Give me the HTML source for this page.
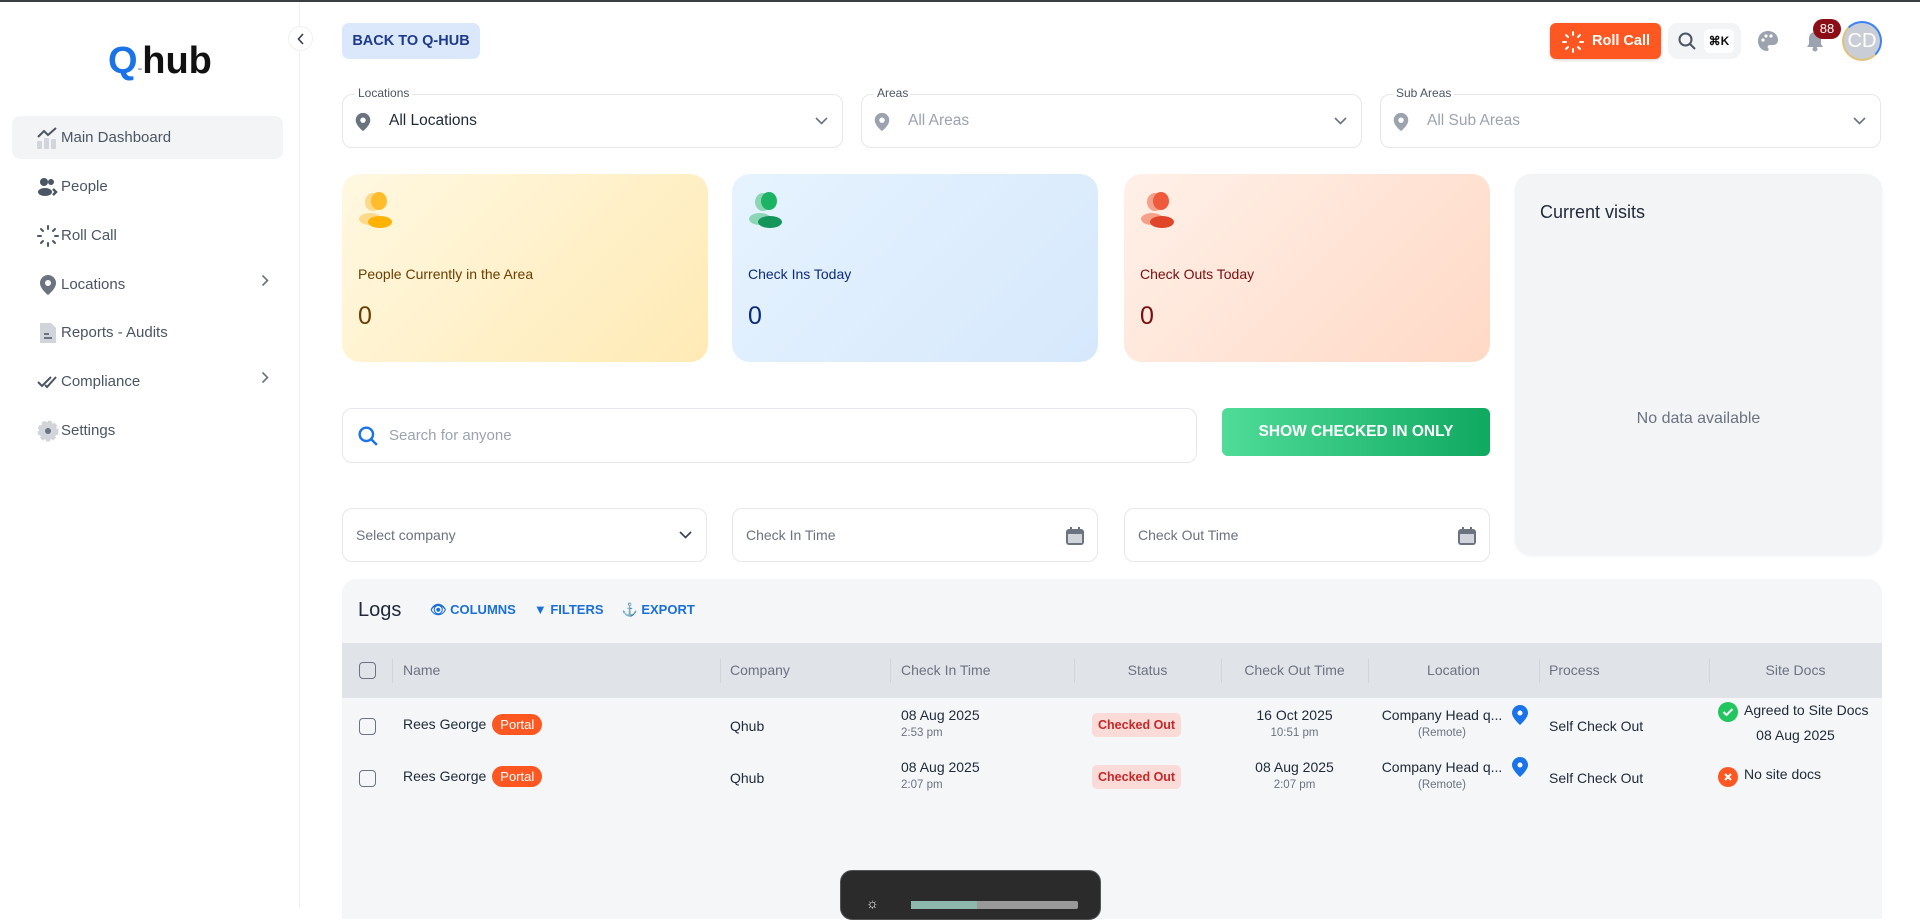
<!DOCTYPE html>
<html><head><meta charset="utf-8"><style>
*{box-sizing:border-box;margin:0;padding:0}
body{width:1920px;height:907px;overflow:hidden;font-family:"Liberation Sans",sans-serif;background:#fff;position:relative;color:#374151}
.a{position:absolute}
.top{left:0;top:0;width:1920px;height:2px;background:#3a3f44}
.side{left:0;top:2px;width:300px;height:905px;border-right:1px solid #eef0f3}
.mi{position:absolute;left:12px;width:271px;height:43px;border-radius:8px;display:flex;align-items:center;padding-left:49px;font-size:15px;color:#4b5563}
.mi svg{position:absolute;left:25px;top:11px}
.chev{position:absolute;right:14px;top:15px}
.box{border:1px solid #e5e7eb;border-radius:10px;background:#fff}
.lbl{position:absolute;top:-9px;left:12px;background:#fff;padding:0 3px;font-size:12px;color:#4b5563}
.dd{position:absolute;right:14px;top:22px}
.card{border-radius:18px}
.th{position:absolute;top:0;height:55px;line-height:55px;font-size:14px;color:#6b7280}
.sep{position:absolute;top:16px;width:1px;height:24px;background:#d1d5db}
.cb{position:absolute;width:17px;height:17px;border:1.5px solid #6b7280;border-radius:4px}
.td{position:absolute;font-size:14px;color:#1f2937}
.sm{font-size:11.5px;color:#6b7280}
.portal{display:inline-block;background:#ff5722;color:#fff;border-radius:12px;padding:3px 8px;font-size:13px;margin-left:6px}
.co{position:absolute;background:#fadbd8;color:#c62828;font-size:12.5px;font-weight:bold;border-radius:5px;padding:5px 6px}
</style></head><body>
<div class="a top"></div>
<div class="a side">
 <div class="a" style="left:108px;top:38px;font-size:38px;font-weight:bold;letter-spacing:0px"><span style="color:#1a73e8">Q</span><span style="color:#9ca3af;font-size:14px">-</span><span style="color:#111">hub</span></div>
 <div class="mi" style="top:114px;background:#f3f4f6"><svg width="22" height="22" viewBox="0 0 22 22"><rect x="0" y="14" width="5" height="8" rx="1" fill="#d1d5db"/><rect x="7" y="11" width="5" height="11" rx="1" fill="#d1d5db"/><rect x="14" y="12" width="5" height="10" rx="1" fill="#d1d5db"/><path d="M1 10 L7 4 L11 8 L19 1" stroke="#4b5563" stroke-width="2" fill="none"/></svg>Main Dashboard</div>
 <div class="mi" style="top:163px"><svg width="22" height="22" viewBox="0 0 22 22"><circle cx="7" cy="6" r="4" fill="#4b5563"/><circle cx="14" cy="6" r="3" fill="#4b5563"/><ellipse cx="8" cy="16" rx="7" ry="4" fill="#4b5563"/><path d="M16 13 l3 3 -3 3" stroke="#4b5563" stroke-width="2.5" fill="none"/></svg>People</div>
 <div class="mi" style="top:212px"><svg width="22" height="22" viewBox="0 0 22 22" stroke="#4b5563" stroke-width="2" stroke-linecap="round"><path d="M11 1v3M11 18v3M1 11h3M18 11h3M4 4l2 2M16 16l2 2M4 18l2-2M16 6l2-2"/></svg>Roll Call</div>
 <div class="mi" style="top:261px"><svg width="22" height="22" viewBox="0 0 22 22"><path d="M11 1a8 8 0 0 0-8 8c0 6 8 12 8 12s8-6 8-12a8 8 0 0 0-8-8z" fill="#6b7280"/><circle cx="11" cy="9" r="3" fill="#fff"/></svg>Locations<svg class="chev" style="left:auto" width="8" height="13" viewBox="0 0 8 13"><path d="M1.5 1.5l5 5-5 5" stroke="#6b7280" stroke-width="1.6" fill="none"/></svg></div>
 <div class="mi" style="top:309px"><svg width="22" height="22" viewBox="0 0 22 22"><path d="M3 1h11l5 5v15H3z" fill="#d1d5db"/><path d="M7 12h5M7 16h8" stroke="#6b7280" stroke-width="2"/></svg>Reports - Audits</div>
 <div class="mi" style="top:358px"><svg width="22" height="22" viewBox="0 0 22 22" stroke="#4b5563" stroke-width="2" fill="none"><path d="M1 11l4 4 9-9M8 14l2 2 9-10"/></svg>Compliance<svg class="chev" style="left:auto" width="8" height="13" viewBox="0 0 8 13"><path d="M1.5 1.5l5 5-5 5" stroke="#6b7280" stroke-width="1.6" fill="none"/></svg></div>
 <div class="mi" style="top:407px"><svg width="22" height="22" viewBox="0 0 22 22"><circle cx="11" cy="11" r="9" fill="#d1d5db" stroke="#d1d5db" stroke-width="3" stroke-dasharray="4 2"/><circle cx="11" cy="11" r="3" fill="#6b7280"/></svg>Settings</div>
</div>
<div class="a" style="left:288px;top:26px;width:25px;height:25px;border-radius:50%;border:1px solid #eef0f3;background:#fff"><svg class="a" style="left:8px;top:6px" width="8" height="12" viewBox="0 0 8 12"><path d="M6 1L1.5 6 6 11" stroke="#374151" stroke-width="1.6" fill="none"/></svg></div>

<div class="a" style="left:342px;top:23px;width:138px;height:36px;background:#dbe8fb;border-radius:7px;color:#1e3a8a;font-size:14.5px;font-weight:bold;text-align:center;line-height:36px">BACK TO Q-HUB</div>

<div class="a" style="left:1550px;top:23px;width:111px;height:36px;background:#ff5722;border-radius:6px;color:#fff;font-weight:bold;font-size:14.5px;line-height:36px;padding-left:42px;box-shadow:0 1px 3px rgba(0,0,0,.2)"><svg class="a" style="left:12px;top:8px" width="22" height="22" viewBox="0 0 22 22" stroke="#fff" stroke-width="2" stroke-linecap="round"><path d="M11 1v3M11 18v3M1 11h3M18 11h3M4 4l2 2M16 16l2 2M4 18l2-2M16 6l2-2"/></svg>Roll Call</div>
<div class="a" style="left:1668px;top:23px;width:73px;height:36px;background:#f3f4f6;border-radius:10px"><svg class="a" style="left:10px;top:9px" width="18" height="18" viewBox="0 0 18 18" stroke="#4b5563" stroke-width="2" fill="none"><circle cx="7.5" cy="7.5" r="6"/><path d="M12 12l5 5"/></svg><div class="a" style="left:36px;top:6px;width:30px;height:24px;background:#fff;border-radius:6px;font-size:12px;font-weight:bold;text-align:center;line-height:24px;color:#111">⌘K</div></div>
<svg class="a" style="left:1757px;top:30px" width="22" height="22" viewBox="0 0 22 22"><path d="M11 1C5 1 1 5 1 11s4 10 9 10c2 0 2-2 1-3s0-3 2-3h3c3 0 5-2 5-5 0-5-4-9-10-9z" fill="#9ca3af"/><circle cx="6" cy="10" r="1.6" fill="#fff"/><circle cx="9" cy="6" r="1.6" fill="#fff"/><circle cx="14" cy="6" r="1.6" fill="#fff"/></svg>
<svg class="a" style="left:1804px;top:30px" width="22" height="22" viewBox="0 0 22 22"><path d="M11 2a6 6 0 0 0-6 6v6l-2 3h16l-2-3V8a6 6 0 0 0-6-6z" fill="#9ca3af"/><circle cx="11" cy="19" r="2.5" fill="#9ca3af"/></svg>
<div class="a" style="left:1813px;top:19px;width:28px;height:20px;background:#8b0d16;border-radius:10px;color:#fff;font-size:13px;text-align:center;line-height:20px">88</div>
<div class="a" style="left:1842px;top:21px;width:40px;height:40px;border-radius:50%;background:#c9ced6;border:2px solid #e0c27a;border-top-color:#3b82f6;border-right-color:#3b82f6;color:#fff;font-size:20px;text-align:center;line-height:36px">CD</div>

<!-- filters -->
<div class="a box" style="left:342px;top:94px;width:501px;height:54px"><span class="lbl">Locations</span><svg class="a" style="left:10px;top:16px" width="20" height="22" viewBox="0 0 22 22"><path d="M11 1a8 8 0 0 0-8 8c0 6 8 12 8 12s8-6 8-12a8 8 0 0 0-8-8z" fill="#6b7280"/><circle cx="11" cy="9" r="3" fill="#fff"/></svg><span class="a" style="left:46px;top:17px;font-size:15.5px;color:#1f2937">All Locations</span><svg class="dd" width="13" height="8" viewBox="0 0 13 8"><path d="M1 1l5.5 5.5L12 1" stroke="#6b7280" stroke-width="1.6" fill="none"/></svg></div>
<div class="a box" style="left:861px;top:94px;width:501px;height:54px"><span class="lbl">Areas</span><svg class="a" style="left:10px;top:16px" width="20" height="22" viewBox="0 0 22 22"><path d="M11 1a8 8 0 0 0-8 8c0 6 8 12 8 12s8-6 8-12a8 8 0 0 0-8-8z" fill="#9ca3af"/><circle cx="11" cy="9" r="3" fill="#fff"/></svg><span class="a" style="left:46px;top:17px;font-size:15.5px;color:#9ca3af">All Areas</span><svg class="dd" width="13" height="8" viewBox="0 0 13 8"><path d="M1 1l5.5 5.5L12 1" stroke="#6b7280" stroke-width="1.6" fill="none"/></svg></div>
<div class="a box" style="left:1380px;top:94px;width:501px;height:54px"><span class="lbl">Sub Areas</span><svg class="a" style="left:10px;top:16px" width="20" height="22" viewBox="0 0 22 22"><path d="M11 1a8 8 0 0 0-8 8c0 6 8 12 8 12s8-6 8-12a8 8 0 0 0-8-8z" fill="#9ca3af"/><circle cx="11" cy="9" r="3" fill="#fff"/></svg><span class="a" style="left:46px;top:17px;font-size:15.5px;color:#9ca3af">All Sub Areas</span><svg class="dd" width="13" height="8" viewBox="0 0 13 8"><path d="M1 1l5.5 5.5L12 1" stroke="#6b7280" stroke-width="1.6" fill="none"/></svg></div>

<!-- cards -->
<div class="a card" style="left:342px;top:174px;width:366px;height:188px;background:linear-gradient(135deg,#fff8e1,#ffeab5)">
 <svg class="a" style="left:15px;top:15px" width="42" height="42" viewBox="0 0 42 42"><ellipse cx="16" cy="13" rx="8" ry="9" fill="#ffd98a"/><ellipse cx="13" cy="30" rx="11" ry="6" fill="#ffd98a"/><ellipse cx="22" cy="12" rx="8" ry="9" fill="#ffbd2e"/><ellipse cx="23" cy="33" rx="12" ry="6" fill="#ffb300"/></svg>
 <div class="a" style="left:16px;top:92px;font-size:14px;color:#6b3d00">People Currently in the Area</div><div class="a" style="left:16px;top:128px;font-size:25px;color:#6b3d00">0</div></div>
<div class="a card" style="left:732px;top:174px;width:366px;height:188px;background:linear-gradient(135deg,#e6f3ff,#d6e8fc)">
 <svg class="a" style="left:15px;top:15px" width="42" height="42" viewBox="0 0 42 42"><ellipse cx="16" cy="13" rx="8" ry="9" fill="#8dd6b5"/><ellipse cx="13" cy="30" rx="11" ry="6" fill="#8dd6b5"/><ellipse cx="22" cy="12" rx="8" ry="9" fill="#1db364"/><ellipse cx="23" cy="33" rx="12" ry="6" fill="#14955a"/></svg>
 <div class="a" style="left:16px;top:92px;font-size:14px;color:#0d2a7a">Check Ins Today</div><div class="a" style="left:16px;top:128px;font-size:25px;color:#0d2a7a">0</div></div>
<div class="a card" style="left:1124px;top:174px;width:366px;height:188px;background:linear-gradient(135deg,#fff0e8,#ffd9c6)">
 <svg class="a" style="left:15px;top:15px" width="42" height="42" viewBox="0 0 42 42"><ellipse cx="16" cy="13" rx="8" ry="9" fill="#f6a08a"/><ellipse cx="13" cy="30" rx="11" ry="6" fill="#f6a08a"/><ellipse cx="22" cy="12" rx="8" ry="9" fill="#ef5a3c"/><ellipse cx="23" cy="33" rx="12" ry="6" fill="#e0452a"/></svg>
 <div class="a" style="left:16px;top:92px;font-size:14px;color:#7a0d0d">Check Outs Today</div><div class="a" style="left:16px;top:128px;font-size:25px;color:#7a0d0d">0</div></div>
<div class="a" style="left:1515px;top:174px;width:367px;height:381px;background:#f3f4f6;border-radius:16px;box-shadow:0 1px 3px rgba(0,0,0,.06)"><div class="a" style="left:25px;top:28px;font-size:18px;color:#1f2937">Current visits</div><div class="a" style="left:0;width:367px;top:236px;text-align:center;font-size:16px;color:#6b7280">No data available</div></div>

<div class="a box" style="left:342px;top:408px;width:855px;height:55px"><svg class="a" style="left:15px;top:17px" width="20" height="20" viewBox="0 0 18 18" stroke="#1a73e8" stroke-width="2.2" fill="none"><circle cx="7.5" cy="7.5" r="6"/><path d="M12 12l5 5"/></svg><span class="a" style="left:46px;top:18px;font-size:15px;color:#9ca3af">Search for anyone</span></div>
<div class="a" style="left:1222px;top:408px;width:268px;height:48px;border-radius:6px;background:linear-gradient(90deg,#4fdc98,#0fa960);color:#fff;font-weight:bold;font-size:15.5px;text-align:center;line-height:48px">SHOW CHECKED IN ONLY</div>

<div class="a box" style="left:342px;top:508px;width:365px;height:54px"><span class="a" style="left:13px;top:18px;font-size:14px;color:#6b7280">Select company</span><svg class="dd" width="13" height="8" viewBox="0 0 13 8"><path d="M1 1l5.5 5.5L12 1" stroke="#374151" stroke-width="1.6" fill="none"/></svg></div>
<div class="a box" style="left:732px;top:508px;width:366px;height:54px"><span class="a" style="left:13px;top:18px;font-size:14px;color:#6b7280">Check In Time</span><svg class="a" style="right:12px;top:17px" width="20" height="20" viewBox="0 0 20 20"><rect x="1" y="3" width="18" height="16" rx="3" fill="#6b7280"/><rect x="3" y="8" width="14" height="9" fill="#d1d5db"/><path d="M6 1v4M14 1v4" stroke="#6b7280" stroke-width="2"/></svg></div>
<div class="a box" style="left:1124px;top:508px;width:366px;height:54px"><span class="a" style="left:13px;top:18px;font-size:14px;color:#6b7280">Check Out Time</span><svg class="a" style="right:12px;top:17px" width="20" height="20" viewBox="0 0 20 20"><rect x="1" y="3" width="18" height="16" rx="3" fill="#6b7280"/><rect x="3" y="8" width="14" height="9" fill="#d1d5db"/><path d="M6 1v4M14 1v4" stroke="#6b7280" stroke-width="2"/></svg></div>

<!-- logs -->
<div class="a" style="left:342px;top:579px;width:1540px;height:340px;background:#f4f6f8;border-radius:14px 14px 0 0;overflow:hidden">
 <div class="a" style="left:16px;top:20px;font-size:20px;color:#1f2937">Logs</div>
 <div class="a" style="left:88px;top:23px;font-size:13px;font-weight:bold;color:#1a6fd8;white-space:nowrap">
  <span>&#128065;&#xFE0E; COLUMNS</span><span style="margin-left:18px">&#9660; FILTERS</span><span style="margin-left:18px">&#9875; EXPORT</span></div>
 <div class="a" style="left:0;top:64px;width:1540px;height:55px;background:#e0e3e8">
  <div class="cb" style="left:17px;top:19px"></div><div class="sep" style="left:50px"></div>
  <div class="th" style="left:61px">Name</div><div class="sep" style="left:378px"></div>
  <div class="th" style="left:388px">Company</div><div class="sep" style="left:548px"></div>
  <div class="th" style="left:559px">Check In Time</div><div class="sep" style="left:732px"></div>
  <div class="th" style="left:732px;width:147px;text-align:center">Status</div><div class="sep" style="left:879px"></div>
  <div class="th" style="left:879px;width:147px;text-align:center">Check Out Time</div><div class="sep" style="left:1026px"></div>
  <div class="th" style="left:1026px;width:171px;text-align:center">Location</div><div class="sep" style="left:1197px"></div>
  <div class="th" style="left:1207px">Process</div><div class="sep" style="left:1367px"></div>
  <div class="th" style="left:1367px;width:173px;text-align:center">Site Docs</div>
 </div>
 <div class="cb" style="left:17px;top:139px"></div>
 <div class="td" style="left:61px;top:135px">Rees George<span class="portal">Portal</span></div>
 <div class="td" style="left:388px;top:139px">Qhub</div>
 <div class="td" style="left:559px;top:128px">08 Aug 2025<div class="sm" style="margin-top:4px">2:53 pm</div></div>
 <div class="co" style="left:750px;top:134px">Checked Out</div>
 <div class="td" style="left:879px;width:147px;text-align:center;top:128px">16 Oct 2025<div class="sm" style="margin-top:4px">10:51 pm</div></div>
 <div class="td" style="left:1030px;width:140px;text-align:center;top:128px">Company Head q...<div class="sm" style="margin-top:4px">(Remote)</div></div>
 <svg class="a" style="left:1170px;top:126px" width="16" height="20" viewBox="0 0 16 20"><path d="M8 0a8 8 0 0 0-8 8c0 5 8 12 8 12s8-7 8-12a8 8 0 0 0-8-8z" fill="#1a73e8"/><circle cx="8" cy="8" r="2.5" fill="#fff"/></svg>
 <div class="td" style="left:1207px;top:139px">Self Check Out</div>
 <svg class="a" style="left:1376px;top:123px" width="20" height="20" viewBox="0 0 20 20"><circle cx="10" cy="10" r="10" fill="#22c55e"/><path d="M5.5 10l3 3 6-6" stroke="#fff" stroke-width="2" fill="none"/></svg>
 <div class="td" style="left:1402px;top:123px">Agreed to Site Docs</div>
 <div class="td" style="left:1367px;width:173px;text-align:center;top:148px">08 Aug 2025</div>
 <div class="cb" style="left:17px;top:191px"></div>
 <div class="td" style="left:61px;top:187px">Rees George<span class="portal">Portal</span></div>
 <div class="td" style="left:388px;top:191px">Qhub</div>
 <div class="td" style="left:559px;top:180px">08 Aug 2025<div class="sm" style="margin-top:4px">2:07 pm</div></div>
 <div class="co" style="left:750px;top:186px">Checked Out</div>
 <div class="td" style="left:879px;width:147px;text-align:center;top:180px">08 Aug 2025<div class="sm" style="margin-top:4px">2:07 pm</div></div>
 <div class="td" style="left:1030px;width:140px;text-align:center;top:180px">Company Head q...<div class="sm" style="margin-top:4px">(Remote)</div></div>
 <svg class="a" style="left:1170px;top:178px" width="16" height="20" viewBox="0 0 16 20"><path d="M8 0a8 8 0 0 0-8 8c0 5 8 12 8 12s8-7 8-12a8 8 0 0 0-8-8z" fill="#1a73e8"/><circle cx="8" cy="8" r="2.5" fill="#fff"/></svg>
 <div class="td" style="left:1207px;top:191px">Self Check Out</div>
 <svg class="a" style="left:1376px;top:188px" width="20" height="20" viewBox="0 0 20 20"><circle cx="10" cy="10" r="10" fill="#ff5722"/><path d="M7 7l6 6M13 7l-6 6" stroke="#fff" stroke-width="2"/></svg>
 <div class="td" style="left:1402px;top:187px">No site docs</div>
</div>
<div class="a" style="left:840px;top:870px;width:261px;height:50px;background:#2b2b2b;border-radius:12px;border:1px solid #555">
 <span class="a" style="left:25px;top:24px;color:#fff;font-size:14px">&#9788;</span>
 <div class="a" style="left:70px;top:30px;width:167px;height:8px;background:#999;border-radius:2px"><div style="width:66px;height:8px;background:#8fb8ad"></div></div>
</div>
</body></html>
